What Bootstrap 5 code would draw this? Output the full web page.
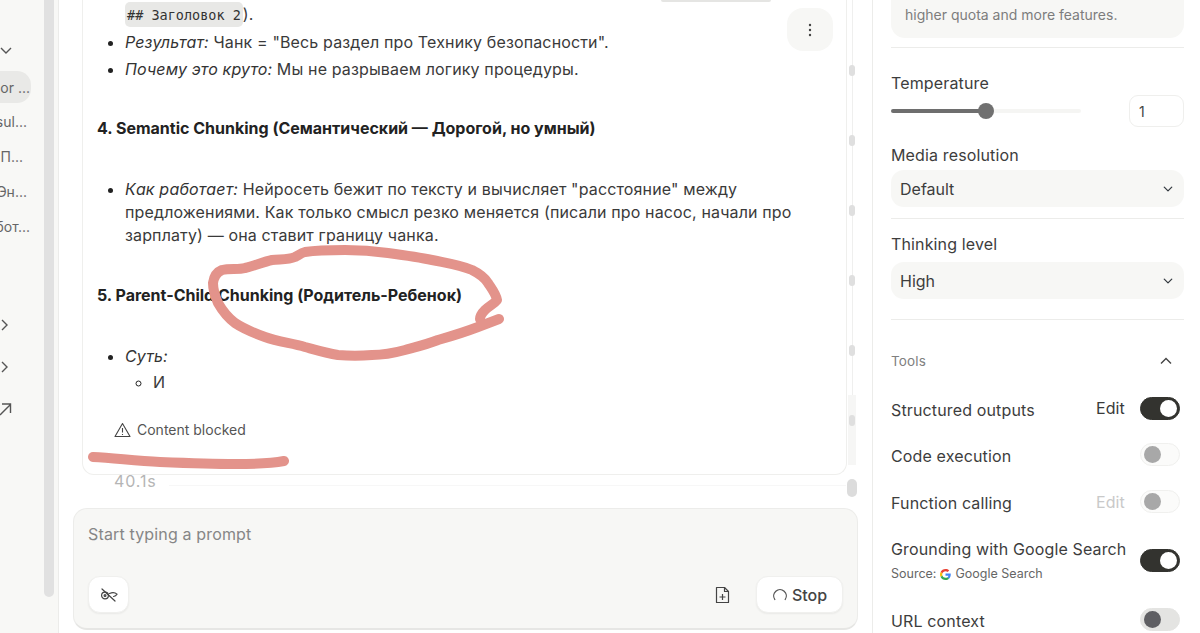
<!DOCTYPE html>
<html lang="ru">
<head>
<meta charset="UTF-8">
<title>Chat</title>
<link href="https://cdn.jsdelivr.net/npm/bootstrap@5.3.0/dist/css/bootstrap.min.css" rel="stylesheet">
<style>
html, body { height: 633px; overflow: hidden; }
body { font-family: Inter, "Liberation Sans", sans-serif; font-size: 16px; color: #3a3a3a; background: #fff; }
.shell { height: 633px; position: relative; }

/* left nav */
.side { width: 59px; background: #f8f8f6; border-right: 1px solid #ececea; flex: none; }
.side-list { width: 44px; height: 633px; overflow: hidden; color: #666; font-size: 14px; }
.side-ico { height: 18px; margin-left: 0; color: #555; }
.side-row { height: 35px; width: 44px; display: flex; align-items: center; justify-content: flex-end; padding-right: 17px; white-space: nowrap; }
.side-row.on { background: #e9e9e7; width: 31px; height: 32px; padding-right: 1px; border-radius: 0 14px 14px 0; margin-top: 2px; margin-bottom: 1px; }
.side-row.tight { padding-right: 14px; }
.side-row.wide { padding-right: 21px; }
.side-bar { width: 10px; height: 597px; background: #e1e1e1; border-radius: 0 0 5px 5px; }

/* chat column */
.chat { width: 813px; flex: none; padding: 0 14px 3px 14px; }
.log { margin-left: 9px; height: 475px; }
.msg { width: 765px; height: 475px; border: 1px solid #efefed; border-top: 0; border-radius: 0 0 12px 12px; padding: 0 14px; flex: none; position: relative; line-height: 23px; letter-spacing: .14px; }
.msg ul { margin: 0; padding-left: 28px; }
.msg li::marker { color: #222; }
.msg li { padding-bottom: 4px; }
.msg em { color: #333; }
.msg h6 { font-size: 16px; font-weight: 700; color: #222; margin: 0; line-height: 23px; letter-spacing: 0; }
.snip { font-family: "DejaVu Sans Mono", "Liberation Mono", monospace; font-size: 13.5px; background: #e8e8e6; border-radius: 5px; padding: 5px 2px 4px 2px; color: #333; letter-spacing: 0; }
.kebab { position: absolute; right: 13px; top: 8px; width: 46px; height: 43px; border-radius: 16px; background: #f7f7f5; border: 0; }
.topsliver { position: absolute; left: 578px; top: 0; width: 110px; height: 2px; background: #e5e5e3; border-radius: 0 0 3px 3px; }
.blocked { font-size: 14px; color: #555; line-height: 18px; letter-spacing: 0; }
.rail { width: 10px; height: 475px; flex: none; padding-top: 65px; background: linear-gradient(#f6f6f5, #f6f6f5) center 395px / 8px 70px no-repeat, linear-gradient(#efefee, #efefee) center top / 1px 395px no-repeat; }
.rail span { display: block; flex: none; width: 6px; height: 11px; border-radius: 3px; background: #dfdfdf; margin: 0 auto 59px; }
.rail .big { width: 10px; height: 18px; border-radius: 5px; margin-bottom: 0; background: #dcdcdc; }
.rail .sp { margin-bottom: 53px; }
.dur { height: 33px; margin-left: 41px; color: #b5b5b5; line-height: 16px; letter-spacing: .9px; }
.dur span { margin-top: -2px; }
.dur i { flex: 1; height: 1px; background: #f7f7f7; margin: 10px 12px 0; display: block; }
.composer { height: 122px; background: #f7f7f5; border: 1px solid #ececea; border-bottom: 2px solid #e6e6e4; border-radius: 14px; padding: 14px 14px 15px 14px; }
.composer p { color: #868686; line-height: 22px; margin: 0; letter-spacing: .15px; }
.whitebtn { background: #fff; border: 1px solid #f0f0ee; border-radius: 12px; height: 37px; padding: 0; box-shadow: 0 1px 2px rgba(0,0,0,.06); color: #444; font-size: 16px; }
.stop { width: 87px; font-weight: 500; }

/* right panel */
.panel { flex: 1; border-left: 1px solid #ececea; padding: 0 16px 0 18px; font-size: 16px; letter-spacing: .14px; }
.quota { height: 38px; background: #f7f7f5; border-radius: 0 0 14px 14px; padding: 5px 14px; font-size: 14px; color: #7d7d7d; line-height: 20px; letter-spacing: 0; }
.rule { height: 1px; background: #ececea; margin: 0; }
.lbl { line-height: 20px; color: #3d3d3d; }
.form-range.temp { width: 190px; height: 16px; }
.temp::-webkit-slider-runnable-track { height: 4px; border-radius: 2px; background: linear-gradient(to right, #6e6e6e 50%, #f5f5f3 50%); }
.temp::-webkit-slider-thumb { width: 16px; height: 16px; margin-top: -6px; background: #707070; }
.numbox { width: 55px; height: 32px; border: 1px solid #efefed; border-radius: 9px; font-size: 14px; padding: 0 9px; color: #444; }
.form-select.pick { height: 37px; background-color: #f7f7f5; border: 0; border-radius: 13px; font-size: 16px; color: #3d3d3d; padding: 0 9px; background-position: right 9px center; background-size: 14px 10px; }
.tools-h { font-size: 13.5px; color: #808080; }
.form-switch .form-check-input.sw { width: 40px; height: 23px; margin: 0 4px 0 0; float: none; border: 1px solid #f0f0ee; background-color: #fbfbfa; background-size: 17px 17px; background-position: 3px center; background-image: url("data:image/svg+xml,%3csvg xmlns='http://www.w3.org/2000/svg' viewBox='-4 -4 8 8'%3e%3ccircle r='4' fill='%23a8a8a8'/%3e%3c/svg%3e"); box-shadow: none; }
.form-switch .form-check-input.sw:checked { background-color: #33332f; border-color: #33332f; background-position: right 2px center; background-image: url("data:image/svg+xml,%3csvg xmlns='http://www.w3.org/2000/svg' viewBox='-4 -4 8 8'%3e%3ccircle r='4' fill='%23fff'/%3e%3c/svg%3e"); }
.form-switch .form-check-input.sw.idle { background-color: #e4e4e2; border-color: #e4e4e2; background-image: url("data:image/svg+xml,%3csvg xmlns='http://www.w3.org/2000/svg' viewBox='-4 -4 8 8'%3e%3ccircle r='4' fill='%235f5f63'/%3e%3c/svg%3e"); }
.toolrow { min-height: 23px; }
.toolrow .lbl { margin-top: 2px; }
.edit { color: #3a3a3a; line-height: 20px; }
.edit.off { color: #c9c9c9; }
.src { font-size: 12.5px; color: #666; line-height: 16px; letter-spacing: 0; }
.ink { position: absolute; left: 0; top: 0; pointer-events: none; }
</style>
</head>
<body>
<div class="shell d-flex">

  <aside class="side d-flex">
    <div class="side-list">
      <div class="side-ico" style="margin-top: 39px;">
        <svg width="12" height="16" viewBox="0 0 12 16" fill="none" stroke="currentColor" stroke-width="1.4"><path d="M1 5l5 5 5-5"/></svg>
      </div>
      <div class="side-row on" style="margin-top: 14px;">or ...</div>
      <div class="side-row">sul...</div>
      <div class="side-row wide">П...</div>
      <div class="side-row">Эн...</div>
      <div class="side-row tight">бот...</div>
      <div class="side-ico" style="margin-top: 69px;">
        <svg width="12" height="16" viewBox="0 0 12 16" fill="none" stroke="currentColor" stroke-width="1.4"><path d="M2 3l5 5-5 5"/></svg>
      </div>
      <div class="side-ico" style="margin-top: 24px;">
        <svg width="12" height="16" viewBox="0 0 12 16" fill="none" stroke="currentColor" stroke-width="1.4"><path d="M2 3l5 5-5 5"/></svg>
      </div>
      <div class="side-ico" style="margin-top: 24px;">
        <svg width="12" height="16" viewBox="0 0 12 16" fill="none" stroke="currentColor" stroke-width="1.4"><path d="M0 14L10 4M2 3h8.500v9"/></svg>
      </div>
    </div>
    <div class="side-bar"></div>
  </aside>

  <main class="chat d-flex flex-column">
    <div class="log d-flex">
      <div class="msg">
        <div class="topsliver"></div>
        <button class="kebab d-flex align-items-center justify-content-center" type="button" aria-label="More">
          <svg width="4" height="14" viewBox="0 0 4 14" fill="#444"><circle cx="2" cy="2" r="1.200"/><circle cx="2" cy="7" r="1.200"/><circle cx="2" cy="12" r="1.200"/></svg>
        </button>
        <ul style="padding-top: 3px;">
          <li style="list-style: none;"><code class="snip">## Заголовок 2</code>).</li>
          <li><em>Результат:</em> Чанк = "Весь раздел про Технику безопасности".</li>
          <li><em>Почему это круто:</em> Мы не разрываем логику процедуры.</li>
        </ul>
        <h6 style="margin-top: 32px;">4. Semantic Chunking (Семантический — Дорогой, но умный)</h6>
        <ul style="margin-top: 38px;">
          <li><em>Как работает:</em> Нейросеть бежит по тексту и вычисляет "расстояние" между предложениями. Как только смысл резко меняется (писали про насос, начали про зарплату) — она ставит границу чанка.</li>
        </ul>
        <h6 style="margin-top: 33px;">5. Parent-Child Chunking (Родитель-Ребенок)</h6>
        <ul style="margin-top: 38px;">
          <li style="padding-bottom: 3px;"><em>Суть:</em>
            <ul style="padding-left: 28px; margin-top: 3px; list-style: circle;"><li>И</li></ul>
          </li>
        </ul>
        <div class="blocked d-flex align-items-center" style="margin: 20px 0 0 17px; gap: 6px;">
          <svg width="17" height="16" viewBox="0 0 17 16" fill="none" stroke="#444" stroke-width="1.100" stroke-linejoin="round"><path d="M8.500 1.500L16 14.500H1z"/><path d="M8.500 6v4.500M8.500 12v1"/></svg>
          <span>Content blocked</span>
        </div>
      </div>
      <div class="rail d-flex flex-column">
        <span></span><span></span><span></span><span></span><span></span><span class="sp"></span><span class="big"></span>
      </div>
    </div>
    <div class="dur d-flex align-items-start"><span>40.1s</span><i></i></div>
    <div class="composer d-flex flex-column">
      <p>Start typing a prompt</p>
      <div class="d-flex align-items-center mt-auto">
        <button class="whitebtn d-flex align-items-center justify-content-center" style="width: 41px;" type="button" aria-label="Hide">
          <svg width="20" height="18" viewBox="0 0 20 18" fill="none" stroke="#444" stroke-width="1.200" stroke-linecap="round"><path d="M3 3l13 12"/><circle cx="6" cy="9.500" r="3.400"/><circle cx="6" cy="9.500" r=".9"/><path d="M10.500 7.500c2.500-1 5.500-1 7.500.6-.8 1.400-2 2.200-3.400 2.400"/></svg>
        </button>
        <svg class="ms-auto" style="margin-right: 26px;" width="15" height="18" viewBox="0 0 15 18" fill="none" stroke="#444" stroke-width="1.200" stroke-linejoin="round"><path d="M1.500 1.500h8l4 4v11h-12z"/><path d="M9.500 1.500v4h4M7.500 8v6M4.500 11h6"/></svg>
        <button class="whitebtn stop d-flex align-items-center justify-content-center gap-1" type="button">
          <svg width="16" height="16" viewBox="0 0 16 16" fill="none" stroke="#555" stroke-width="1.300" stroke-linecap="round"><path d="M2.800 12.500A6.300 6.300 0 1 1 13.200 12.500"/></svg>
          <span>Stop</span>
        </button>
      </div>
    </div>
  </main>

  <aside class="panel">
    <div class="quota">higher quota and more features.</div>
    <div class="rule" style="margin-top: 9px;"></div>

    <div class="lbl" style="margin-top: 25px;">Temperature</div>
    <div class="d-flex align-items-center justify-content-between" style="margin-top: 2px;">
      <input type="range" class="form-range temp" min="0" max="2" step="0.100" value="1" aria-label="Temperature">
      <div class="numbox d-flex align-items-center">1</div>
    </div>
    <div class="lbl" style="margin-top: 18px;">Media resolution</div>
    <select class="form-select pick" style="margin-top: 5px;" aria-label="Media resolution"><option>Default</option></select>
    <div class="rule" style="margin-top: 11px;"></div>

    <div class="lbl" style="margin-top: 15px;">Thinking level</div>
    <select class="form-select pick" style="margin-top: 8px;" aria-label="Thinking level"><option>High</option></select>
    <div class="rule" style="margin-top: 20px;"></div>

    <div class="tools-h d-flex align-items-center justify-content-between" style="margin-top: 31px; padding-right: 12px;">
      <span>Tools</span>
      <svg width="12" height="8" viewBox="0 0 12 8" fill="none" stroke="#444" stroke-width="1.400"><path d="M1 6.500l5-5 5 5"/></svg>
    </div>

    <div class="toolrow d-flex align-items-center form-switch p-0" style="margin-top: 26px;">
      <span class="lbl" style="margin-top: 3px;">Structured outputs</span>
      <span class="edit ms-auto" style="margin: 0 15px 1px 0;">Edit</span>
      <input class="form-check-input sw" type="checkbox" role="switch" checked aria-label="Structured outputs">
    </div>
    <div class="toolrow d-flex align-items-center form-switch p-0" style="margin-top: 23px;">
      <span class="lbl">Code execution</span>
      <input class="form-check-input sw ms-auto" type="checkbox" role="switch" aria-label="Code execution">
    </div>
    <div class="toolrow d-flex align-items-center form-switch p-0" style="margin-top: 24px;">
      <span class="lbl">Function calling</span>
      <span class="edit off ms-auto" style="margin-right: 15px;">Edit</span>
      <input class="form-check-input sw" type="checkbox" role="switch" aria-label="Function calling">
    </div>
    <div class="d-flex align-items-center form-switch p-0" style="margin-top: 26px;">
      <div>
        <div class="lbl">Grounding with Google Search</div>
        <div class="src d-flex align-items-center" style="margin-top: 7px; gap: 4px;">
          <span>Source:</span>
          <svg width="11" height="11" viewBox="0 0 48 48"><path fill="#EA4335" d="M24 9.500c3.500 0 6.700 1.300 9.200 3.500l6.900-6.900C35.900 2.300 30.400 0 24 0 14.600 0 6.500 5.400 2.600 13.200l8 6.200C12.500 13.700 17.800 9.500 24 9.500z"/><path fill="#4285F4" d="M46.900 24.500c0-1.600-.1-3.100-.4-4.500H24v9h12.900c-.6 3-2.200 5.500-4.700 7.200l7.700 6c4.500-4.200 7-10.300 7-17.700z"/><path fill="#FBBC05" d="M10.500 28.600c-.5-1.400-.8-3-.8-4.600s.3-3.200.8-4.600l-8-6.200C.9 16.500 0 20.100 0 24s.9 7.500 2.600 10.800l7.900-6.200z"/><path fill="#34A853" d="M24 48c6.500 0 11.900-2.100 15.900-5.800l-7.700-6c-2.200 1.400-4.900 2.300-8.200 2.300-6.200 0-11.500-4.200-13.400-9.900l-8 6.200C6.500 42.600 14.600 48 24 48z"/></svg>
          <span>Google Search</span>
        </div>
      </div>
      <input class="form-check-input sw ms-auto" type="checkbox" role="switch" checked aria-label="Grounding with Google Search">
    </div>
    <div class="toolrow d-flex align-items-center form-switch p-0" style="margin-top: 26px;">
      <span class="lbl">URL context</span>
      <input class="form-check-input sw idle ms-auto" type="checkbox" role="switch" aria-label="URL context">
    </div>
  </aside>

  <!-- hand drawn marks over the screenshot -->
  <svg class="ink" width="1200" height="633" viewBox="0 0 1200 633" fill="none" stroke="#e3938b" stroke-linecap="round" stroke-linejoin="round">
    <path stroke-width="10" d="M499 319L478 327C465 332 452 336 438 340C428 344 416 347 405 350C394 353 384 355 372 355C360 356 350 356 338 355C326 353 316 350 305 347C292 343 278 342 265 337C254 333 244 329 235 323C227 317 222 310 218 303C215 296 213 290 213 283C214 276 217 272 222 270C230 268 238 270 245 268C254 266 263 262 272 260C280 259 288 260 295 257C299 255 301 253 305 252C318 250 332 250 345 250C360 250 374 251 388 253C403 255 418 257 432 260C446 263 460 265 472 270C480 274 485 278 488 283C492 289 496 294 497 300C494 304 489 306 485 310C482 313 480 316 480 319"/>
    <path stroke-width="10" d="M93 457C115 458 135 461 160 462C185 463 210 464 235 464C250 464 268 464 284 461"/>
  </svg>
</div>
<script src="https://cdn.jsdelivr.net/npm/bootstrap@5.3.0/dist/js/bootstrap.bundle.min.js"></script>
</body>
</html>
